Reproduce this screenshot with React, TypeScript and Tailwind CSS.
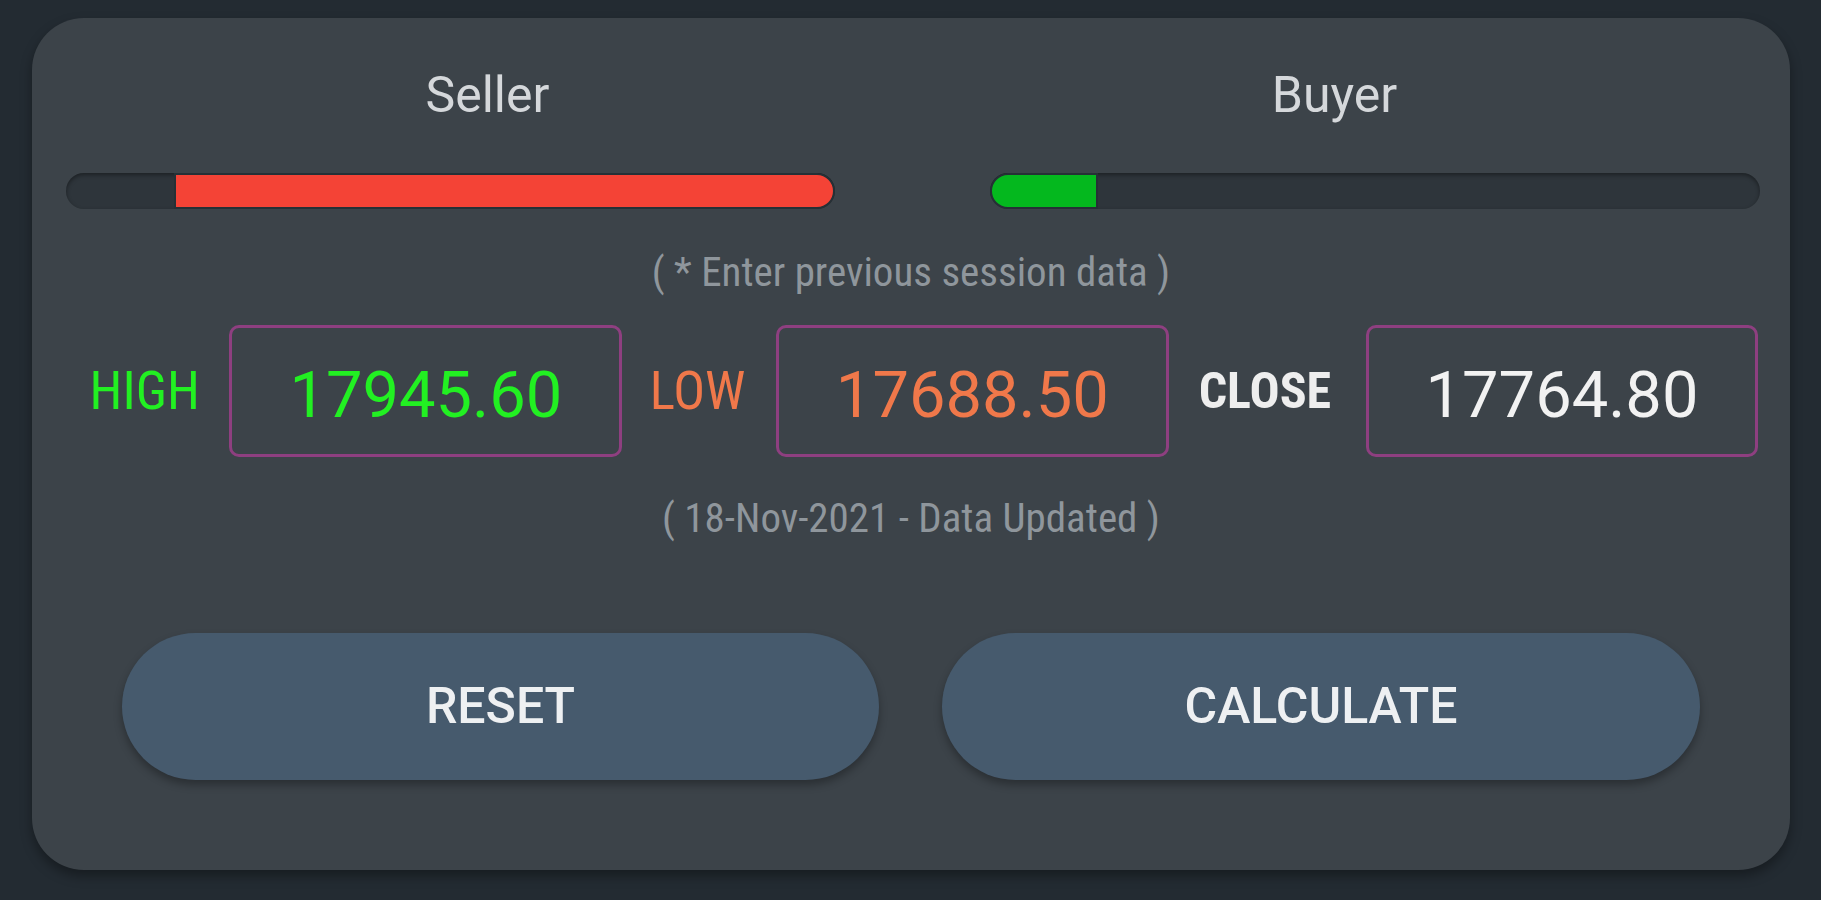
import React from 'react';

const condensed = { fontFamily: '"Roboto Condensed", "Liberation Sans Narrow", Roboto, sans-serif' };
const roboto = { fontFamily: 'Roboto, "Noto Sans", sans-serif' };

const Bar = ({ percent, color, reverse }: { percent: number; color: string; reverse?: boolean }) => (
  <div className={`h-[36px] w-full rounded-full bg-[#2e353b] shadow-[inset_0_2px_4px_rgba(0,0,0,0.4)] overflow-hidden flex ${reverse ? 'justify-end' : 'justify-start'}`}>
    <div
      className={`h-full border-2 border-[#263036] ${color} ${reverse ? 'rounded-r-full' : 'rounded-l-full'}`}
      style={{ width: `${percent}%` }}
    />
  </div>
);

const ValueBox = ({ value, color, width }: { value: string; color: string; width: string }) => (
  <div className={`${width} h-[132px] rounded-[10px] border-[3px] border-[#8e3f80] flex items-center justify-center pt-[8px]`}>
    <span className={`text-[65px] leading-none ${color}`} style={roboto}>{value}</span>
  </div>
);

export default function App() {
  return (
    <div className="min-h-screen w-full bg-[#232b32] pt-[18px] pl-[32px] pr-[31px] pb-[30px]">
      <div className="h-[852px] rounded-[52px] bg-[#3c4349] shadow-[0_6px_12px_rgba(0,0,0,0.35)] px-[32px]">
        {/* Titles */}
        <div className="h-[154px] grid grid-cols-2 items-center text-[50px] leading-none text-[#d5d8db]" style={roboto}>
          <div className="text-center">Seller</div>
          <div className="text-center">Buyer</div>
        </div>

        {/* Bars */}
        <div className="h-[38px] grid grid-cols-[769px_770px] gap-x-[155px] items-center pl-[2px]">
          <Bar percent={86} color="bg-[#f44336]" reverse />
          <Bar percent={14} color="bg-[#04b81e]" />
        </div>

        <div className="mt-[22px] h-[80px] flex items-center justify-center text-[41px] leading-none text-[#8f969c]" style={condensed}>
          ( * Enter previous session data )
        </div>

        {/* Inputs */}
        <div className="mt-[13px] flex items-center pl-[16px]">
          <div className="w-[130px] text-center text-[53px] leading-none text-[#22f022]" style={condensed}>HIGH</div>
          <div className="ml-[20px]">
            <ValueBox value="17945.60" color="text-[#22f022]" width="w-[393px]" />
          </div>
          <div className="ml-[10px] w-[131px] text-center text-[53px] leading-none text-[#f0784a]" style={condensed}>LOW</div>
          <div className="ml-[13px]">
            <ValueBox value="17688.50" color="text-[#f0784a]" width="w-[393px]" />
          </div>
          <div className="ml-[10px] w-[173px] text-center text-[50px] leading-none font-bold text-[#eeeeee]" style={condensed}>CLOSE</div>
          <div className="ml-[15px]">
            <ValueBox value="17764.80" color="text-[#f2f2f2]" width="w-[392px]" />
          </div>
        </div>

        <div className="mt-[21px] h-[80px] flex items-center justify-center text-[41px] leading-none text-[#8f969c]" style={condensed}>
          ( 18-Nov-2021 - Data Updated )
        </div>

        {/* Buttons */}
        <div className="mt-[75px] flex justify-center gap-x-[63px]">
          <button className="w-[757px] h-[147px] rounded-full bg-[#465a6d] shadow-[0_5px_8px_rgba(0,0,0,0.3)] text-[50px] font-medium text-[#eef0f2]" style={roboto}>
            RESET
          </button>
          <button className="w-[758px] h-[147px] rounded-full bg-[#465a6d] shadow-[0_5px_8px_rgba(0,0,0,0.3)] text-[50px] font-medium text-[#eef0f2]" style={roboto}>
            CALCULATE
          </button>
        </div>
      </div>
    </div>
  );
}
